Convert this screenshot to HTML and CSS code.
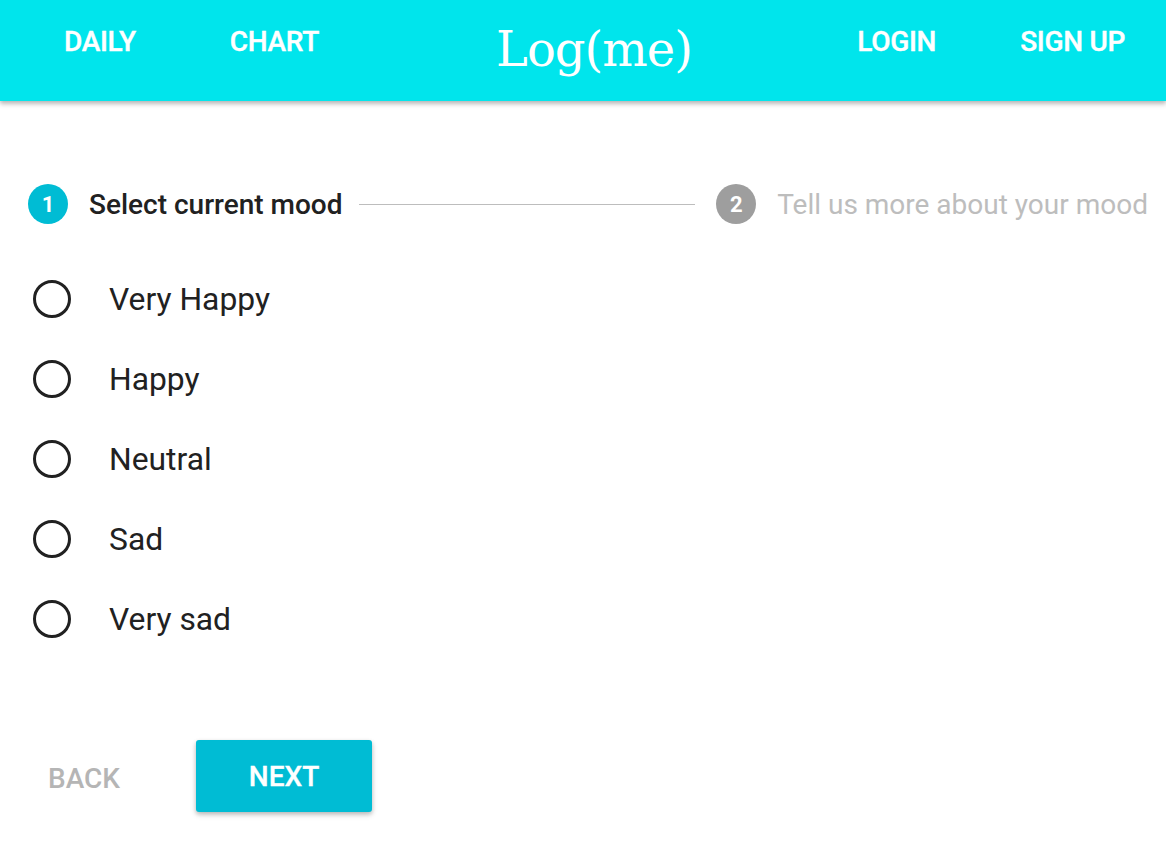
FILE: index.html
```html
<!DOCTYPE html>
<html>
<head>
<meta charset="utf-8">
<link rel="stylesheet" href="styles.css">
</head>
<body>
<header class="appbar">
  <nav class="nav-left">
    <a class="nav-link daily">DAILY</a>
    <a class="nav-link chart">CHART</a>
  </nav>
  <div class="brand">Log(me)</div>
  <nav class="nav-right">
    <a class="nav-link login">LOGIN</a>
    <a class="nav-link signup">SIGN UP</a>
  </nav>
</header>
<main class="content">
  <div class="stepper">
    <span class="step-icon active">1</span>
    <span class="step-label active">Select current mood</span>
    <span class="connector"></span>
    <span class="step-icon">2</span>
    <span class="step-label">Tell us more about your mood</span>
  </div>
  <div class="radio-group">
    <label class="radio-row"><span class="radio"></span><span class="radio-label">Very Happy</span></label>
    <label class="radio-row"><span class="radio"></span><span class="radio-label">Happy</span></label>
    <label class="radio-row"><span class="radio"></span><span class="radio-label">Neutral</span></label>
    <label class="radio-row"><span class="radio"></span><span class="radio-label">Sad</span></label>
    <label class="radio-row"><span class="radio"></span><span class="radio-label">Very sad</span></label>
  </div>
  <div class="actions">
    <button class="btn btn-back">BACK</button>
    <button class="btn btn-next">NEXT</button>
  </div>
</main>
</body>
</html>
```
FILE: styles.css
```css
* { box-sizing: border-box; }
html, body { margin: 0; padding: 0; background: #fff; }
body { font-family: Roboto, "Liberation Sans", sans-serif; color: #212121; width: 1166px; height: 856px; overflow: hidden; }

.appbar {
  height: 101px;
  background: #00e5ec;
  display: flex;
  align-items: flex-start;
  justify-content: space-between;
  box-shadow: 0 2px 4px rgba(0,0,0,0.2), 0 4px 5px rgba(0,0,0,0.12);
  position: relative;
  z-index: 1;
}
.nav-left, .nav-right { display: flex; padding-top: 25px; }
.nav-left { padding-left: 64px; width: 400px; }
.nav-right { padding-right: 41px; width: 400px; justify-content: flex-end; }
.nav-link {
  color: #fff;
  font-weight: 500;
  font-size: 28px;
  line-height: 34px;
  letter-spacing: -0.3px;
  -webkit-text-stroke: 0.4px #fff;
}
.chart { margin-left: 94px; }
.signup { margin-left: 84px; }
.brand {
  color: #fff;
  font-family: "DejaVu Serif", serif;
  font-size: 48px;
  line-height: 56px;
  padding-top: 21px;
  margin-left: 22px;
  letter-spacing: -1px;
}

.content { padding: 0; }
.stepper {
  display: flex;
  align-items: center;
  margin-top: 83px;
  height: 40px;
  padding-left: 28px;
  padding-right: 18px;
}
.step-icon {
  width: 40px; height: 40px; border-radius: 50%;
  background: #9e9e9e; color: #fff;
  display: flex; align-items: center; justify-content: center;
  font-size: 22px; font-weight: 700;
  flex: none;
}
.step-icon.active { background: #00bcd4; }
.step-label {
  margin-left: 21px;
  font-size: 28px;
  color: #bdbdbd;
  white-space: nowrap;
}
.step-label.active { color: #212121; font-weight: 500; }
.connector {
  flex: 1;
  height: 1px;
  background: #bdbdbd;
  margin: 0 21px 0 16px;
}

.radio-group { margin-top: 35px; display: flex; flex-direction: column; }
.radio-row { display: flex; align-items: center; height: 80px; padding-left: 33px; }
.radio {
  width: 38px; height: 38px; border-radius: 50%;
  border: 3px solid #212121;
  flex: none;
}
.radio-label { margin-left: 38px; font-size: 31.8px; color: #212121; }

.actions { display: flex; align-items: center; margin-top: 79px; padding-left: 28px; }
.btn {
  font-family: Roboto, "Liberation Sans", sans-serif;
  font-weight: 500;
  font-size: 28px;
  border: none;
  background: none;
  cursor: pointer;
}
.btn-back { color: #b5b5b5; width: 112px; height: 72px; padding: 0; text-align: center; margin-top: 4px; }
.btn-next {
  margin-left: 56px;
  width: 176px; height: 72px;
  background: #00bcd4; color: #fff;
  border-radius: 3px;
  box-shadow: 0 2px 4px rgba(0,0,0,0.2), 0 3px 6px rgba(0,0,0,0.12);
  -webkit-text-stroke: 0.3px #fff;
}
```
